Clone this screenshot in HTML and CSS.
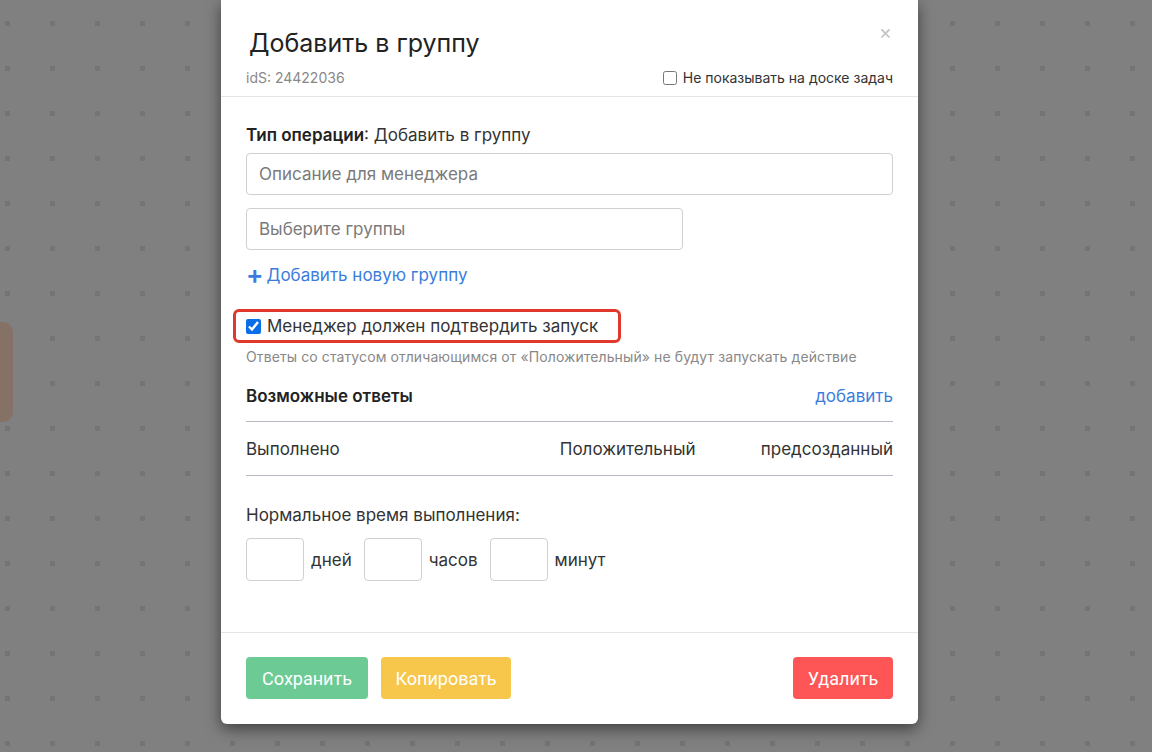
FILE: index.html
```html
<!DOCTYPE html>
<html lang="ru">
<head>
  <meta charset="UTF-8">
  <meta name="viewport" content="width=device-width, initial-scale=1.0">
  <title>Добавить в группу</title>
  <link rel="stylesheet" href="styles.css">
</head>
<body>

  <!-- board tab under the overlay -->
  <div class="board-tab"></div>

  <div class="modal">
    <div class="modal-header">
      <h2 class="modal-title">Добавить в группу</h2>
      <span class="close">&times;</span>
      <div class="meta">
        <span class="ids">idS: 24422036</span>
        <label class="hide-check"><input type="checkbox"> Не показывать на доске задач</label>
      </div>
    </div>

    <div class="modal-body">
      <div class="op-type"><b>Тип операции</b>: Добавить в группу</div>
      <input type="text" class="form-field" placeholder="Описание для менеджера">
      <input type="text" class="form-field short" placeholder="Выберите группы">
      <a class="add-group" href="#"><span class="plus">+</span>Добавить новую группу</a>

      <label class="confirm"><input type="checkbox" checked> Менеджер должен подтвердить запуск</label>
      <p class="hint">Ответы со статусом отличающимся от «Положительный» не будут запускать действие</p>

      <div class="answers-head">
        <span class="answers-title">Возможные ответы</span>
        <a class="link" href="#">добавить</a>
      </div>
      <div class="answer-row">
        <span class="answer-name">Выполнено</span>
        <span class="answer-status">Положительный</span>
        <span class="answer-type">предсозданный</span>
      </div>

      <div class="time-label">Нормальное время выполнения:</div>
      <div class="time-row">
        <input type="text" class="time-field"><span>дней</span>
        <input type="text" class="time-field"><span>часов</span>
        <input type="text" class="time-field"><span>минут</span>
      </div>
    </div>

    <div class="modal-footer">
      <button class="btn btn-save">Сохранить</button>
      <button class="btn btn-copy">Копировать</button>
      <button class="btn btn-delete">Удалить</button>
    </div>
  </div>

</body>
</html>
```

FILE: styles.css
```css
html, body {
  margin: 0;
  height: 100%;
}
body {
  font-family: Inter, "Noto Sans", sans-serif;
  color: #333;
  background-color: #808080;
  background-image: conic-gradient(from 0deg at 5px 5px, transparent 75%, #747474 0);
  background-size: 45px 45px;
  background-position: 5px 21px;
  overflow: hidden;
  position: relative;
}
.board-tab {
  position: absolute;
  left: 0;
  top: 322px;
  width: 13px;
  height: 100px;
  background: #857165;
  border-radius: 0 10px 10px 0;
}
.modal {
  margin-left: 221px;
  width: 697px;
  background: #fff;
  border-radius: 0 0 6px 6px;
  box-shadow: 0 5px 15px rgba(0, 0, 0, 0.5);
}
.modal-header {
  position: relative;
  padding: 25px 25px 8px;
  border-bottom: 1px solid #e5e5e5;
}
.modal-title {
  margin: 0 0 0 3px;
  font-size: 25px;
  line-height: 36px;
  font-weight: 400;
  color: #222;
}
.close {
  position: absolute;
  right: 26px;
  top: 20px;
  font-size: 20px;
  color: #c4c4c4;
}
.meta {
  margin-top: 7px;
  display: flex;
  justify-content: space-between;
  align-items: center;
  font-size: 14px;
  line-height: 20px;
}
.ids {
  color: #888;
}
.hide-check {
  display: flex;
  align-items: center;
  gap: 6px;
  color: #333;
}
.hide-check input {
  margin: 0;
  width: 14px;
  height: 14px;
}
.modal-body {
  padding: 27px 25px 51px;
}
.op-type {
  font-size: 17px;
  line-height: 22px;
}
.op-type b {
  font-weight: 600;
  color: #222;
}
.form-field {
  display: block;
  box-sizing: border-box;
  width: 100%;
  height: 42px;
  margin-top: 7px;
  padding: 0 12px;
  border: 1px solid #cfcfd4;
  border-radius: 4px;
  font-family: inherit;
  font-size: 17px;
}
.form-field::placeholder {
  color: #7a7a7a;
}
.form-field.short {
  width: 437px;
  margin-top: 13px;
}
.add-group {
  display: block;
  margin-top: 14px;
  font-size: 17px;
  line-height: 22px;
  color: #3b7ddd;
  text-decoration: none;
}
.plus {
  font-size: 26px;
  font-weight: 600;
  margin-right: 3px;
  vertical-align: -3px;
}
.confirm {
  box-sizing: border-box;
  display: flex;
  align-items: center;
  gap: 6px;
  width: 388px;
  height: 34px;
  margin: 23px 0 0 -13px;
  padding-left: 10px;
  border: 3px solid #e0382d;
  border-radius: 6px;
  font-size: 17px;
  white-space: nowrap;
  color: #333;
}
.confirm input {
  margin: 0;
  width: 15px;
  height: 15px;
  accent-color: #0a6ee8;
}
.hint {
  margin: 4px 0 0;
  font-size: 14px;
  line-height: 20px;
  letter-spacing: 0.1px;
  color: #888;
}
.answers-head {
  display: flex;
  justify-content: space-between;
  margin-top: 18px;
  padding-bottom: 14px;
  border-bottom: 1px solid #b9b9c6;
  font-size: 17px;
  line-height: 22px;
}
.answers-title {
  font-weight: 600;
  color: #222;
}
.link {
  color: #3b7ddd;
  text-decoration: none;
}
.answer-row {
  display: flex;
  padding: 16px 0 15px;
  border-bottom: 1px solid #b9b9c6;
  font-size: 17px;
  line-height: 22px;
}
.answer-name {
  flex: 1;
}
.answer-status {
  width: 201px;
}
.time-label {
  margin-top: 28px;
  font-size: 17px;
  line-height: 22px;
}
.time-row {
  display: flex;
  align-items: center;
  margin-top: 12px;
  font-size: 17px;
}
.time-field {
  box-sizing: border-box;
  width: 58px;
  height: 43px;
  border: 1px solid #cfcfd4;
  border-radius: 4px;
}
.time-row span {
  margin: 0 12px 0 7px;
}
.modal-footer {
  display: flex;
  gap: 13px;
  padding: 24px 25px 25px;
  border-top: 1px solid #e5e5e5;
}
.btn {
  height: 42px;
  padding: 0;
  border: none;
  border-radius: 4px;
  color: #fff;
  font-family: Roboto, sans-serif;
  font-size: 18px;
  cursor: pointer;
}
.btn-save {
  width: 122px;
  background: #6ccb95;
}
.btn-copy {
  width: 130px;
  background: #f7c74b;
}
.btn-delete {
  width: 100px;
  margin-left: auto;
  background: #fe5656;
}
```
